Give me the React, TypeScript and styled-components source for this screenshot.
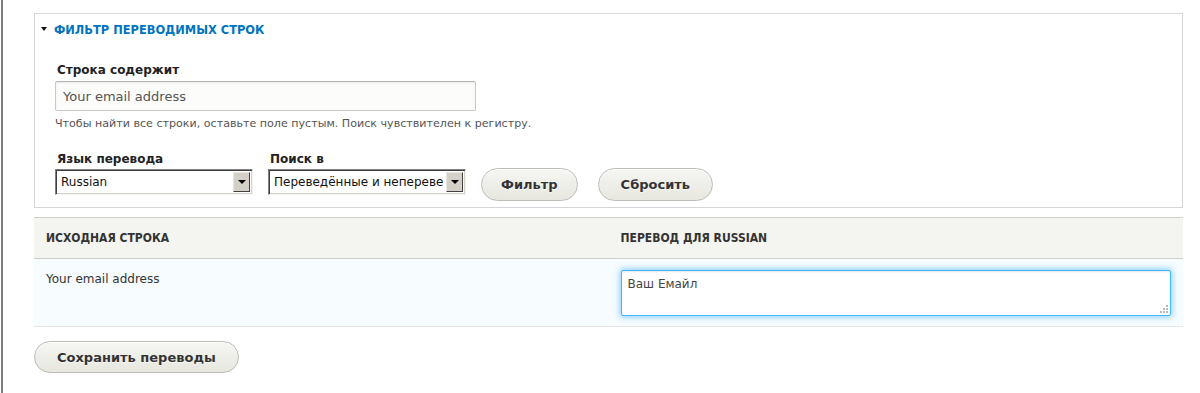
import React from "react";
import styled, { createGlobalStyle } from "styled-components";

const GlobalStyle = createGlobalStyle`
  html, body { margin: 0; padding: 0; background: #fff; }
  body { font-family: "DejaVu Sans", Verdana, sans-serif; color: #333; }
  * { box-sizing: border-box; }
`;

const Frame = styled.div`
  margin-left: 1px;
  border-left: 2px solid #7d7d7d;
  min-height: 393px;
  padding: 13px 17px 0 31px;
`;

const Fieldset = styled.section`
  border: 1px solid #d6d6d6;
  padding: 7px 20px 6px 20px;
`;

const Legend = styled.div`
  display: flex;
  align-items: center;
  gap: 7px;
  margin-left: -14px;
  height: 16px;
  font-family: "DejaVu Sans Condensed", "DejaVu Sans", sans-serif;
  font-stretch: condensed;
  font-weight: bold;
  font-size: 12.7px;
  color: #0074bd;
  text-transform: uppercase;
`;

const Caret = styled.span`
  width: 0;
  height: 0;
  border-left: 3.5px solid transparent;
  border-right: 3.5px solid transparent;
  border-top: 4px solid #111;
`;

const FormItem = styled.div<{ $mt?: number }>`
  display: flex;
  flex-direction: column;
  margin-top: ${(p) => p.$mt ?? 0}px;
`;

const Label = styled.label`
  font-weight: bold;
  font-size: 12px;
  line-height: 16px;
  color: #222;
  padding-left: 2px;
  margin-bottom: 2px;
`;

const TextInput = styled.input`
  width: 421px;
  height: 30px;
  margin-top: 1px;
  border: 1px solid #c8c8c8;
  border-top-color: #b4b4b4;
  border-radius: 2px;
  background: #fcfcfa;
  box-shadow: inset 0 1px 2px rgba(0, 0, 0, 0.08);
  padding: 0 7px;
  font-family: "DejaVu Sans", sans-serif;
  font-size: 13px;
  color: #555;
  outline: none;
`;

const Description = styled.div`
  margin-top: 6px;
  font-size: 11.1px;
  line-height: 14px;
  color: #555;
`;

const FilterRow = styled.div`
  display: flex;
  align-items: flex-start;
  margin-top: 20px;
  gap: 15px;
`;

const SelectBox = styled.div`
  display: flex;
  width: 198px;
  height: 26px;
  border: 1px solid;
  border-color: #808080 #f4f4f4 #f4f4f4 #808080;
  box-shadow: inset 1px 1px 0 #404040, inset -1px -1px 0 #d4d0c8;
  background: #fff;
  padding: 2px;
`;

const SelectValue = styled.div`
  flex: 1;
  min-width: 0;
  overflow: hidden;
  white-space: nowrap;
  font-size: 12px;
  line-height: 20px;
  padding-left: 3px;
  color: #111;
`;

const SelectArrow = styled.div`
  width: 17px;
  height: 20px;
  flex: none;
  display: flex;
  align-items: center;
  justify-content: center;
  background: #d4d0c8;
  border: 1px solid;
  border-color: #e8e6e0 #404040 #404040 #e8e6e0;
  &::after {
    content: "";
    border-left: 4px solid transparent;
    border-right: 4px solid transparent;
    border-top: 4px solid #000;
  }
`;

const Button = styled.button<{ $mt?: number; $px?: number }>`
  height: ${(p) => (p.$mt ? 33 : 32)}px;
  margin-top: ${(p) => p.$mt ?? 0}px;
  padding: 0 ${(p) => p.$px ?? 22}px;
  border: 1px solid #bdbdb8;
  border-radius: 20em;
  background: linear-gradient(to bottom, #f6f6f3, #e7e7df);
  box-shadow: inset 0 1px 0 rgba(255, 255, 255, 0.8);
  font-family: "DejaVu Sans", sans-serif;
  font-weight: bold;
  font-size: 13px;
  color: #333;
  text-shadow: 0 1px rgba(255, 255, 255, 0.6);
  cursor: pointer;
  white-space: nowrap;
`;

const ButtonGroup = styled.div`
  display: flex;
  gap: 20px;
`;

const Table = styled.div`
  margin-top: 9px;
  display: grid;
  grid-template-columns: 1fr 1fr;
`;

const HeadCell = styled.div`
  height: 42px;
  background: #f4f4f0;
  border-top: 1px solid #cfcfcb;
  border-bottom: 1px solid #cfcfcb;
  padding: 0 12px;
  display: flex;
  align-items: center;
  font-family: "DejaVu Sans Condensed", "DejaVu Sans", sans-serif;
  font-stretch: condensed;
  font-weight: bold;
  font-size: 12px;
  color: #333;
  text-transform: uppercase;
`;

const Cell = styled.div`
  background: #f7fcff;
  border-bottom: 1px solid #e4e4e0;
  padding: 11px 12px 10px;
  font-size: 12px;
  line-height: 18px;
  color: #333;
`;

const AreaWrap = styled.div`
  position: relative;
  height: 46px;
`;

const TextArea = styled.textarea`
  display: block;
  width: 100%;
  height: 46px;
  resize: none;
  border: 1px solid #40b6ff;
  border-radius: 2px;
  background: #fff;
  box-shadow: 0 0 6px 1px rgba(51, 170, 255, 0.6), inset 0 1px 2px rgba(0, 0, 0, 0.1);
  padding: 5px 6px;
  font-family: "DejaVu Sans", sans-serif;
  font-size: 12px;
  line-height: 16px;
  color: #444;
  outline: none;
`;

const Grip = styled.svg`
  position: absolute;
  right: 3px;
  bottom: 3px;
`;

const Actions = styled.div`
  margin-top: 14px;
`;

export default function App() {
  return (
    <>
      <GlobalStyle />
      <Frame>
        <Fieldset>
          <Legend>
            <Caret />
            Фильтр переводимых строк
          </Legend>
          <FormItem $mt={25}>
            <Label>Строка содержит</Label>
            <TextInput defaultValue="Your email address" />
          </FormItem>
          <Description>
            Чтобы найти все строки, оставьте поле пустым. Поиск чувствителен к регистру.
          </Description>
          <FilterRow>
            <FormItem>
              <Label>Язык перевода</Label>
              <SelectBox>
                <SelectValue>Russian</SelectValue>
                <SelectArrow />
              </SelectBox>
            </FormItem>
            <FormItem>
              <Label>Поиск в</Label>
              <SelectBox>
                <SelectValue>Переведённые и непереве</SelectValue>
                <SelectArrow />
              </SelectBox>
            </FormItem>
            <ButtonGroup>
              <Button $mt={17} $px={19}>Фильтр</Button>
              <Button $mt={17}>Сбросить</Button>
            </ButtonGroup>
          </FilterRow>
        </Fieldset>
        <Table>
          <HeadCell>Исходная строка</HeadCell>
          <HeadCell>Перевод для Russian</HeadCell>
          <Cell>Your email address</Cell>
          <Cell>
            <AreaWrap>
              <TextArea defaultValue="Ваш Емайл" />
              <Grip width="8" height="8" viewBox="0 0 8 8">
                <g fill="#b8b8b8">
                  <rect x="6" y="0" width="2" height="2" />
                  <rect x="3" y="3" width="2" height="2" />
                  <rect x="6" y="3" width="2" height="2" />
                  <rect x="0" y="6" width="2" height="2" />
                  <rect x="3" y="6" width="2" height="2" />
                  <rect x="6" y="6" width="2" height="2" />
                </g>
              </Grip>
            </AreaWrap>
          </Cell>
        </Table>
        <Actions>
          <Button>Сохранить переводы</Button>
        </Actions>
      </Frame>
    </>
  );
}
